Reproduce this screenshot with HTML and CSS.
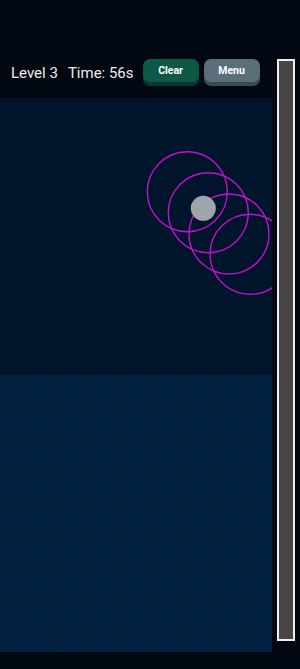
FILE: index.html
```html
<!DOCTYPE html>
<html>
<head>
<meta charset="utf-8">
<link rel="stylesheet" href="styles.css">
</head>
<body>
<div class="app">
  <div class="main">
    <div class="header">
      <span class="level">Level 3</span>
      <span class="time">Time: 56s</span>
      <button class="btn btn-clear">Clear</button>
      <button class="btn btn-menu">Menu</button>
    </div>
    <div class="game">
      <div class="upper">
        <svg class="field" width="272" height="277" viewBox="0 0 272 277">
          <g fill="none" stroke="#c010cc" stroke-width="1.4">
            <circle cx="187.3" cy="93.7" r="40"/>
            <circle cx="208.3" cy="114.7" r="40"/>
            <circle cx="229" cy="136" r="40"/>
            <circle cx="250" cy="156.3" r="40"/>
          </g>
          <circle cx="203.3" cy="110.3" r="12.5" fill="#a0a4ab"/>
        </svg>
      </div>
      <div class="lower"></div>
    </div>
  </div>
  <div class="bar"></div>
</div>
</body>
</html>
```
FILE: styles.css
```css
html, body {
  margin: 0;
  padding: 0;
  background: #020812;
  height: 669px;
  overflow: hidden;
}
.app {
  display: flex;
  align-items: flex-start;
  padding-top: 59px;
  font-family: Roboto, "Liberation Sans", sans-serif;
}
.main {
  width: 272px;
  display: flex;
  flex-direction: column;
}
.header {
  height: 39px;
  display: flex;
  align-items: flex-start;
  padding-left: 11px;
  box-sizing: border-box;
}
.level, .time {
  color: #ececec;
  font-size: 15px;
  line-height: 28px;
}
.level {
  margin-right: 10px;
}
.time {
  margin-right: 9px;
}
.btn {
  border: none;
  margin: 0;
  padding: 0;
  height: 23px;
  border-radius: 7px;
  color: #ffffff;
  font-family: Roboto, "Liberation Sans", sans-serif;
  font-weight: bold;
  font-size: 10.5px;
}
.btn-clear {
  width: 56px;
  background: #0c5a46;
  box-shadow: 0 4px 0 #073a2e;
  margin-right: 5px;
}
.btn-menu {
  width: 56px;
  background: #5a6f7a;
  box-shadow: 0 4px 0 #3c4b54;
}
.game {
  display: flex;
  flex-direction: column;
  height: 554px;
}
.upper {
  height: 277px;
  background: #00152b;
  overflow: hidden;
}
.field {
  display: block;
}
.lower {
  height: 277px;
  background-color: #01203f;
  background-image:
    linear-gradient(to right, #0a1c34 1px, transparent 1px),
    linear-gradient(to bottom, #0a1c34 1px, transparent 1px);
  background-size: 31.2px 31.2px;
  background-position: 0 0;
}
.bar {
  margin-left: 5px;
  width: 18px;
  height: 582px;
  box-sizing: border-box;
  border: 2px solid #f0f0f0;
  background: #464646;
}
```
